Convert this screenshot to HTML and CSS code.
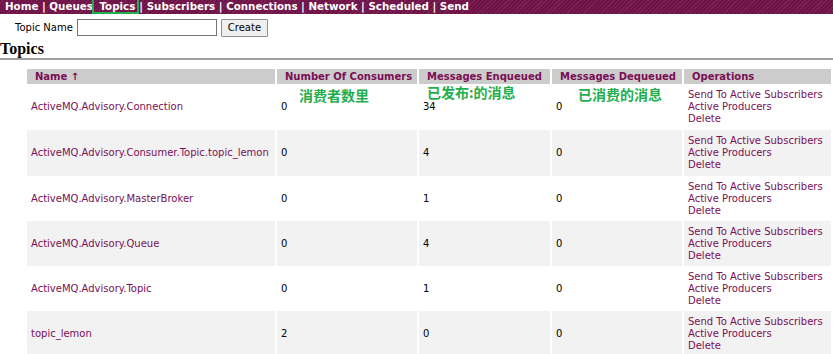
FILE: index.html
```html
<!DOCTYPE html>
<html lang="en">
<head>
    <meta charset="UTF-8">
    <title>localhost : Topics</title>
    <link rel="stylesheet" href="styles.css">
</head>
<body>
    <!-- Top navigation -->
    <div class="topnav">
        <a href="#">Home</a> | <a href="#">Queues</a> <span class="marked"><a href="#">Topics</a></span>| <a href="#">Subscribers</a> | <a href="#">Connections</a> | <a href="#">Network</a> | <a href="#">Scheduled</a> | <a href="#">Send</a>
    </div>

    <form class="create-form">
        <label for="topicName">Topic Name</label>
        <input type="text" id="topicName" class="name-input">
        <button type="button" class="create-btn">Create</button>
    </form>

    <h2 class="page-title">Topics</h2>

    <div class="table-wrap">
        <table class="topics">
            <thead>
                <tr>
                    <th class="col-name">Name &#8593;</th>
                    <th class="col-cons">Number Of Consumers</th>
                    <th class="col-enq">Messages Enqueued</th>
                    <th class="col-deq">Messages Dequeued</th>
                    <th class="col-ops">Operations</th>
                </tr>
            </thead>
            <tbody>
                <tr>
                    <td><a href="#">ActiveMQ.Advisory.Connection</a></td>
                    <td>0</td>
                    <td>34</td>
                    <td>0</td>
                    <td class="ops"><a href="#">Send To Active Subscribers</a><br><a href="#">Active Producers</a><br><a href="#">Delete</a></td>
                </tr>
                <tr>
                    <td><a href="#">ActiveMQ.Advisory.Consumer.Topic.topic_lemon</a></td>
                    <td>0</td>
                    <td>4</td>
                    <td>0</td>
                    <td class="ops"><a href="#">Send To Active Subscribers</a><br><a href="#">Active Producers</a><br><a href="#">Delete</a></td>
                </tr>
                <tr>
                    <td><a href="#">ActiveMQ.Advisory.MasterBroker</a></td>
                    <td>0</td>
                    <td>1</td>
                    <td>0</td>
                    <td class="ops"><a href="#">Send To Active Subscribers</a><br><a href="#">Active Producers</a><br><a href="#">Delete</a></td>
                </tr>
                <tr>
                    <td><a href="#">ActiveMQ.Advisory.Queue</a></td>
                    <td>0</td>
                    <td>4</td>
                    <td>0</td>
                    <td class="ops"><a href="#">Send To Active Subscribers</a><br><a href="#">Active Producers</a><br><a href="#">Delete</a></td>
                </tr>
                <tr>
                    <td><a href="#">ActiveMQ.Advisory.Topic</a></td>
                    <td>0</td>
                    <td>1</td>
                    <td>0</td>
                    <td class="ops"><a href="#">Send To Active Subscribers</a><br><a href="#">Active Producers</a><br><a href="#">Delete</a></td>
                </tr>
                <tr>
                    <td><a href="#">topic_lemon</a></td>
                    <td>2</td>
                    <td>0</td>
                    <td>0</td>
                    <td class="ops"><a href="#">Send To Active Subscribers</a><br><a href="#">Active Producers</a><br><a href="#">Delete</a></td>
                </tr>
            </tbody>
        </table>

        <!-- annotations drawn over the table -->
        <span class="note note-cons">消费者数里</span>
        <span class="note note-enq">已发布:的消息</span>
        <span class="note note-deq">已消费的消息</span>
    </div>
</body>
</html>
```

FILE: styles.css
```css
body {
    margin: 0;
    padding: 0;
    font-family: "DejaVu Sans", Verdana, sans-serif;
    font-size: 10px;
    color: #000;
    background-color: #fff;
}
a {
    color: #7a0f55;
    text-decoration: none;
}
.topnav {
    height: 14px;
    line-height: 13px;
    padding-left: 5px;
    font-weight: bold;
    font-size: 10.3px;
    color: #fff;
    white-space: nowrap;
    background-color: #6d1346;
    background-image: repeating-linear-gradient(135deg, #6d1346 0px, #6d1346 2px, #7d2256 2px, #7d2256 3px);
}
.topnav a {
    color: #fff;
}
.marked {
    display: inline-block;
    height: 12px;
    padding: 0 2px 0 5px;
    margin-left: -4px;
    border: 2px solid #1fae4b;
    border-top: 0;
    vertical-align: top;
}
.create-form {
    display: flex;
    align-items: center;
    height: 17px;
    margin: 5px 0 0 15px;
    font-size: 10px;
}
.create-form label {
    margin-right: 4px;
}
.name-input {
    box-sizing: border-box;
    width: 140px;
    height: 17px;
    margin: 0 4px 0 0;
    padding: 0 2px;
    border: 1px solid #767676;
    font-size: 10px;
}
.create-btn {
    box-sizing: border-box;
    height: 18px;
    padding: 0 6px;
    border: 1px solid #8f8f8f;
    border-radius: 1px;
    background-color: #efefef;
    font-family: "DejaVu Sans", Verdana, sans-serif;
    font-size: 10px;
    color: #000;
}
.page-title {
    margin: 4px 0 0;
    padding-bottom: 1px;
    border-bottom: 2px solid #a0a0a0;
    font-family: "Liberation Serif", "Times New Roman", serif;
    font-size: 16px;
    line-height: 17px;
}
.table-wrap {
    position: relative;
    margin: 9px 0 0 27px;
    width: 804px;
}
.topics {
    width: 804px;
    border-collapse: collapse;
    table-layout: fixed;
}
.topics th,
.topics td {
    box-sizing: border-box;
}
.col-name { width: 249px; }
.col-cons { width: 142px; }
.col-enq { width: 133px; }
.col-deq { width: 132px; }
.col-ops { width: 148px; }
.topics th {
    height: 15px;
    padding: 0 0 0 8px;
    background-color: #cccccc;
    color: #7a0f55;
    font-weight: bold;
    text-align: left;
    white-space: nowrap;
}
.topics th + th,
.topics td + td {
    border-left: 2px solid #fff;
}
.topics td {
    height: 45px;
    padding: 4px 0 4px 4px;
    line-height: 12px;
    vertical-align: middle;
    white-space: nowrap;
}
.topics tbody tr:nth-child(-n+2) td {
    height: 46px;
}
.topics tbody tr:nth-child(even) td {
    background-color: #f2f2f2;
}
.note {
    position: absolute;
    color: #1fae4b;
    font-family: "Noto Sans CJK SC", sans-serif;
    font-weight: bold;
    font-size: 14px;
    line-height: 14px;
}
.note-cons { left: 272px; top: 19px; }
.note-enq { left: 400px; top: 16px; }
.note-deq { left: 551px; top: 18px; }
```
